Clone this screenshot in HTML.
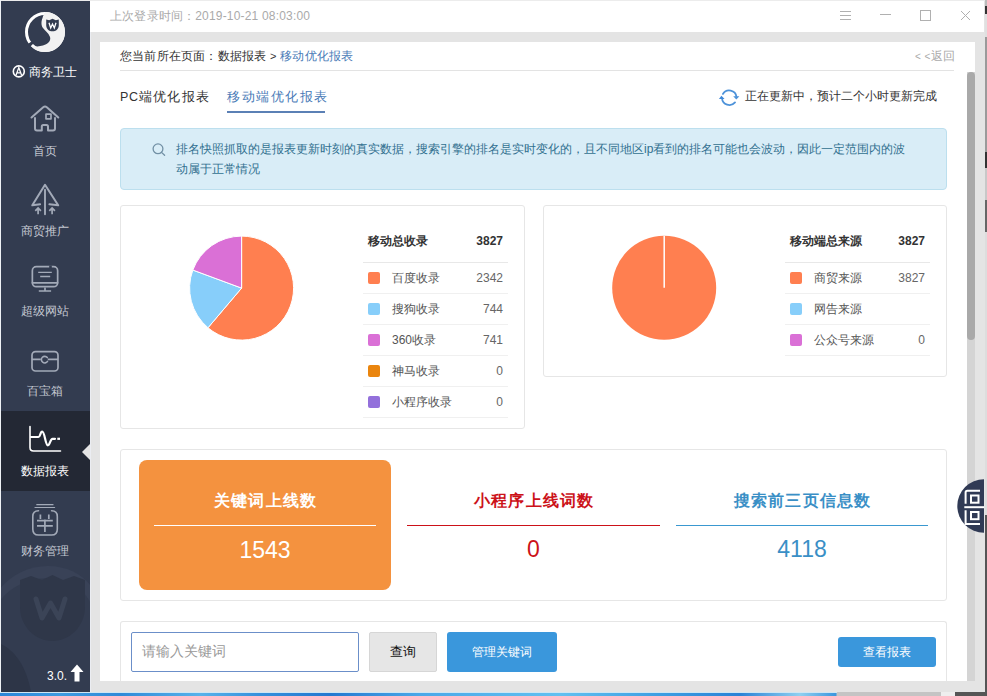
<!DOCTYPE html>
<html><head><meta charset="utf-8">
<style>
*{margin:0;padding:0;box-sizing:border-box}
html,body{width:987px;height:696px;overflow:hidden;background:#2a6fb8;font-family:"Liberation Sans",sans-serif;font-size:12px;color:#333}
.abs{position:absolute}
#desk{left:0;top:692px;width:987px;height:4px;background:linear-gradient(90deg,#2a86d8 0,#3d9be0 60px,#2f8ad8 120px,#57b2ea 200px,#3590dc 260px,#2478d0 330px,#4aa8e8 420px,#62c0f0 560px,#3d9ee2 660px,#2a82d6 740px,#8fd0f0 800px,#3a96de 836px,#c4c4c4 837px,#c4c4c4 941px,#eeeeee 941px,#eeeeee 955px,#555 955px)}
#deskr{left:984px;top:0;width:3px;height:696px;background:linear-gradient(180deg,#bbb 0,#bbb 6px,#333 6px,#333 14px,#e0e0e0 14px,#e0e0e0 37px,#9a9a9a 37px,#9a9a9a 152px,#333 152px,#333 168px,#c8c8c8 168px,#c8c8c8 200px,#666 200px,#666 232px,#ddd 232px,#ddd 515px,#555 515px)}
#win{left:0;top:0;width:985px;height:692px;background:#e4e4e4}
#topline{left:0;top:0;width:985px;height:1px;background:#ececec}
#side{left:0;top:1px;width:90px;height:691px;background:#333c50;overflow:hidden}
#sideb{left:0;top:0;width:1px;height:692px;background:#eef1f5}
#topbar{left:90px;top:1px;width:894px;height:31px;background:#fff}
.si{position:absolute;left:0;width:90px;height:80px}
.si .lb{position:absolute;left:0;width:90px;top:52px;text-align:center;color:#c5c9d2;font-size:12px;line-height:16px}
.si svg{position:absolute;left:0;top:0}
#panel{left:100px;top:42px;width:875px;height:639px;background:#fff}
</style></head>
<body>
<div id="desk" class="abs"></div>
<div class="abs" style="left:0;top:692px;width:837px;height:1px;background:#cfe6f3"></div>
<div id="deskr" class="abs"></div>
<div id="win" class="abs"></div>
<div id="topline" class="abs"></div>

<!-- sidebar -->
<div id="side" class="abs">
  <svg class="abs" style="left:0;top:0" width="90" height="691" viewBox="0 1 90 691">
    <!-- watermark -->
    <g>
      <path d="M-10,610 C-5,585 20,566 48,566 C80,566 100,590 100,610 L100,692 L-10,692 Z" fill="#394257"/>
      <path d="M-10,620 C-4,596 20,578 48,578 C76,578 94,598 96,622 L96,692 L-10,692 Z" fill="#333c50"/>
      <path d="M-10,640 C10,645 25,660 31,692 L-10,692 Z" fill="#2d3547"/>
      <path d="M20,580 L31,576 L42,580 L52.5,575 L63,580 L74,576 L85,580 L85,607 C85,626 70,641 52.5,641 C35,641 20,626 20,607 Z" fill="#2f3749"/>
      <path d="M36,599 L42,618 L50.5,603 L59,618 L65,599" fill="none" stroke="#3b4457" stroke-width="5" stroke-linecap="round" stroke-linejoin="round"/>
    </g>
    <!-- logo -->
    <circle cx="45" cy="32" r="18.5" fill="none" stroke="#fff" stroke-width="3"/>
    <path d="M30.15,46.85 L33.69,43.31 L31.9,41.18 L27.8,44.05 Z" fill="#333c50"/>
    <path d="M45,12 A20,20 0 1,1 31,46.3 C35,47 41,46.5 45.5,44.5 C50,42.5 51,39 49.8,36.5 C48.5,33 45,30.5 43,28 C41,25.5 41.2,21 42.5,18 C43.2,16 44.3,13 45,12 Z" fill="#f2f2f2"/>
    <path d="M46.2,19.6 L49.2,20.3 L52.5,18.7 L55.8,20.3 L58.8,19.6 L58.8,25.2 C58.8,29 56,31.3 52.5,31.3 C49,31.3 46.2,29 46.2,25.2 Z" fill="#333c50"/>
    <path d="M49,22.8 L50.7,28 L52.5,24 L54.3,28 L56,22.8" fill="none" stroke="#fff" stroke-width="1.3" stroke-linejoin="miter"/>
    <circle cx="18.8" cy="71.4" r="5.5" fill="none" stroke="#fff" stroke-width="1.6"/>
    <path d="M16,75.2 L18.8,67.6 L21.6,75.2 M16.9,72.8 L20.7,72.8" fill="none" stroke="#fff" stroke-width="1.3"/>
  </svg>
  <div class="abs" style="left:29px;top:64px;font-size:12px;line-height:14px;color:#fff;letter-spacing:0px;font-weight:500">商务卫士</div>

  <!-- items: top = item top - 1 (side top offset) -->
  <div class="si" style="top:90px">
    <svg width="90" height="50" viewBox="0 0 90 50" fill="none" stroke="#a3aab8" stroke-width="2" stroke-linejoin="round" stroke-linecap="round">
      <path d="M31.5,26.5 L43.2,16.2 Q45,14.8 46.8,16.2 L58.3,26.5"/>
      <path d="M35,27 L35,37.5 Q35,39.5 37,39.5 L41.8,39.5 L41.8,35.5 Q41.8,34 43.3,34 L46.5,34 Q48,34 48,35.5 L48,39.5 L53,39.5 Q55,39.5 55,37.5 L55,27"/>
      <rect x="46" y="23.2" width="5" height="4.6" stroke-width="1.7"/>
    </svg>
    <div class="lb">首页</div>
  </div>
  <div class="si" style="top:170px">
    <svg width="90" height="50" viewBox="0 0 90 50" fill="none" stroke="#a3aab8" stroke-width="2" stroke-linejoin="round" stroke-linecap="round">
      <path d="M40.1,33.3 L32.3,34.3 L45,13.8 L58.2,34.3 L49.4,33.3"/>
      <path d="M45,18.6 L45,43.3" stroke-width="1.9"/>
      <path d="M35.3,39.8 L38.1,36.9 L40.9,39.8 M38.1,37.5 L38.1,43.3 M49.3,39.8 L52.1,36.9 L54.9,39.8 M52.1,37.5 L52.1,43.3" stroke-width="1.7" stroke-linecap="butt" stroke-linejoin="miter"/>
    </svg>
    <div class="lb">商贸推广</div>
  </div>
  <div class="si" style="top:250px">
    <svg width="90" height="50" viewBox="0 0 90 50" fill="none" stroke="#a3aab8" stroke-width="2" stroke-linejoin="round" stroke-linecap="round">
      <rect x="32.35" y="15.65" width="25.3" height="20.05" rx="4" stroke-width="1.7"/>
      <path d="M49.2,14.5 L51.8,14.5 L51.8,17 L49.2,17 Z" fill="#333c50" stroke="none"/>
      <path d="M32.4,31.8 L57.6,31.8" stroke-width="1.7"/>
      <path d="M38.2,21.4 L51.8,21.4 M40.2,25.5 L50.2,25.5" stroke-width="1.4" stroke-linecap="butt"/>
      <path d="M45,36.5 L45,39.5 M38.8,40 L51.1,40" stroke-width="1.7" stroke-linecap="butt"/>
    </svg>
    <div class="lb">超级网站</div>
  </div>
  <div class="si" style="top:330px">
    <svg width="90" height="50" viewBox="0 0 90 50" fill="none" stroke="#a3aab8" stroke-width="2" stroke-linejoin="round" stroke-linecap="round">
      <rect x="32" y="20.7" width="26" height="19.3" rx="3.5" stroke-width="1.7"/>
      <path d="M32,28.4 L40.8,28.4 M47.8,28.4 L58,28.4" stroke-width="1.6" stroke-linecap="butt"/>
      <path d="M47.3,26.6 A3.3,3.3 0 1,0 47.5,30.4" stroke-width="1.6"/>
    </svg>
    <div class="lb">百宝箱</div>
  </div>
  <div class="si" style="top:410px;background:#232834">
    <svg width="90" height="80" viewBox="0 0 90 80" fill="none" stroke="#fff" stroke-width="2" stroke-linejoin="round" stroke-linecap="round">
      <path d="M30,15.5 L30,36.5 Q30,40 33.5,40 L60.5,40" stroke-width="1.6"/>
      <path d="M31,26 L38.5,26 C40.3,26 40.3,20.6 42.2,20.6 C44.8,20.6 45.3,34.3 47.9,34.3 C49.9,34.3 50.3,27.8 52.5,27.8 L55,27.8" stroke-width="2.2"/>
      <path d="M57.3,27.8 L60,27.8" stroke-width="2.2" stroke-linecap="butt"/>
      <path d="M82,41 L90,33 L90,49 Z" fill="#e4e4e4" stroke="none"/>
    </svg>
    <div class="lb" style="color:#fff">数据报表</div>
  </div>
  <div class="si" style="top:490px">
    <svg width="90" height="50" viewBox="0 0 90 50" fill="none" stroke="#a3aab8" stroke-width="2" stroke-linejoin="round" stroke-linecap="round">
      <path d="M36.8,13.7 L53,13.7 M35,16.5 L54.6,16.5" stroke-width="1.2"/>
      <path d="M38.5,19.8 Q32.8,19.8 32.8,25.5 L32.8,38.2 Q32.8,44 38.5,44 L51.6,44 Q57.3,44 57.3,38.2 L57.3,25.5 Q57.3,19.8 51.6,19.8" stroke-width="1.6"/>
      <path d="M40.4,23.4 L40.4,27.9 M48.8,23.4 L48.8,27.9 M37,29.7 L52.8,29.7 M37,34.9 L52.8,34.9 M44.9,28.5 L44.9,40.9" stroke-width="1.7" stroke-linecap="butt"/>
    </svg>
    <div class="lb">财务管理</div>
  </div>
  <div class="abs" style="left:47px;top:668px;color:#fff;font-size:12px;line-height:14px">3.0.</div>
  <svg class="abs" style="left:70px;top:663px" width="14" height="18" viewBox="0 0 14 18"><path d="M7,0.5 L13.5,8 L9.5,8 L9.5,17.5 L4.5,17.5 L4.5,8 L0.5,8 Z" fill="#fff"/></svg>
</div>
<div id="sideb" class="abs"></div>
<div class="abs" style="left:90px;top:32px;width:1px;height:660px;background:#ebedf2"></div>

<!-- top bar -->
<div id="topbar" class="abs">
  <div class="abs" style="left:20px;top:8px;color:#aaa;font-size:12px;line-height:14px;letter-spacing:0.18px">上次登录时间：2019-10-21 08:03:00</div>
  <svg class="abs" style="left:740px;top:0" width="154" height="31" viewBox="830 1 154 31" fill="none" stroke="#b0b0b0" stroke-width="1">
    <path d="M840,11.5 L851,11.5 M840,15.5 L851,15.5 M840,19.5 L851,19.5"/>
    <path d="M880,14.5 L891,14.5"/>
    <rect x="920.5" y="10.5" width="10" height="10"/>
    <path d="M961,11 L970,20 M970,11 L961,20"/>
  </svg>
</div>

<!-- content panel -->
<div id="panel" class="abs"></div>
<div class="abs" style="left:120px;top:49px;font-size:12px;line-height:14px;color:#333;white-space:nowrap;letter-spacing:0.2px">您当前所在页面：数据报表 <span style="font-size:11px">&gt;</span> <span style="color:#4a7bb7">移动优化报表</span></div>
<div class="abs" style="left:915px;top:49px;font-size:12px;line-height:14px;color:#aaa;white-space:nowrap"><span style="font-size:10px;letter-spacing:0.5px">&lt; &lt;</span>返回</div>
<div class="abs" style="left:120px;top:70px;width:834px;height:1px;background:#e3e3e3"></div>

<!-- scrollbar -->
<div class="abs" style="left:967px;top:72px;width:8px;height:609px;background:#d4d4d4"></div>
<div class="abs" style="left:967px;top:72px;width:8px;height:268px;background:#a9a9a9;border-radius:4px 4px 4px 4px"></div>

<!-- tabs -->
<div class="abs" style="left:120px;top:89px;font-size:12.5px;line-height:16px;color:#333;white-space:nowrap;letter-spacing:1.3px"><span style="letter-spacing:0.7px">PC</span>端优化报表</div>
<div class="abs" style="left:227px;top:89px;font-size:12.5px;line-height:16px;color:#4a7bb7;white-space:nowrap;letter-spacing:1.5px">移动端优化报表</div>
<div class="abs" style="left:227px;top:111px;width:98px;height:2px;background:#5b80b5"></div>

<svg class="abs" style="left:718px;top:88px" width="22" height="19" viewBox="0 0 22 19">
  <g fill="none" stroke="#4d92d9" stroke-width="1.8" stroke-linecap="round">
    <path d="M4.9,5.9 A7.4,7.4 0 0,1 18.5,8.8"/>
    <path d="M17,14.4 A7.4,7.4 0 0,1 4,10.2"/>
  </g>
  <path d="M15.2,8.3 L21.4,8.3 L18.3,11.6 Z" fill="#4d92d9"/>
  <path d="M0.9,11 L6.6,11 L3.4,7.7 Z" fill="#3f88d8"/>
</svg>
<div class="abs" style="left:745px;top:89px;font-size:12px;line-height:14px;color:#333;white-space:nowrap">正在更新中，预计二个小时更新完成</div>

<!-- info box -->
<div class="abs" style="left:120px;top:128px;width:827px;height:62px;background:#d9edf7;border:1px solid #bcdfee;border-radius:4px"></div>
<svg class="abs" style="left:150px;top:141px" width="18" height="17" viewBox="0 0 18 17" fill="none" stroke="#7290a5" stroke-width="1.3">
  <circle cx="8" cy="7.8" r="4.9"/>
  <path d="M11.5,11.4 L14.6,14.3" stroke-linecap="round"/>
</svg>
<div class="abs" style="left:176px;top:139px;font-size:12px;line-height:20px;color:#31708f;white-space:nowrap;letter-spacing:0px">排名快照抓取的是报表更新时刻的真实数据，搜索引擎的排名是实时变化的，且不同地区ip看到的排名可能也会波动，因此一定范围内的波<br>动属于正常情况</div>

<!-- card 1 -->
<div class="abs" style="left:120px;top:205px;width:405px;height:224px;border:1px solid #e6e6e6;border-radius:3px;background:#fff"></div>
<svg class="abs" style="left:120px;top:205px" width="405" height="224" viewBox="120 205 405 224">
  <g stroke="#fff" stroke-width="1">
    <path d="M241.6,288.1 L241.6,236.1 A52,52 0 1,1 207.97,327.76 Z" fill="#ff7f50"/>
    <path d="M241.6,288.1 L207.97,327.76 A52,52 0 0,1 192.83,270.06 Z" fill="#87cefa"/>
    <path d="M241.6,288.1 L192.83,270.06 A52,52 0 0,1 241.6,236.1 Z" fill="#da70d6"/>
  </g>
</svg>
<div class="abs" style="left:368px;top:234px;font-size:12px;line-height:14px;color:#333;font-weight:bold;white-space:nowrap">移动总收录</div>
<div class="abs" style="left:440px;top:234px;width:63px;text-align:right;font-size:12px;line-height:14px;color:#333;font-weight:bold">3827</div>
<div class="abs" style="left:363px;top:262px;width:145px;height:1px;background:#e8e8e8"></div>
<div class="abs" style="left:368px;top:272px;width:12px;height:12px;border-radius:2px;background:#ff7f50"></div>
<div class="abs" style="left:392px;top:271px;font-size:12px;line-height:14px;color:#555;white-space:nowrap">百度收录</div>
<div class="abs" style="left:440px;top:271px;width:63px;text-align:right;font-size:12px;line-height:14px;color:#666">2342</div>
<div class="abs" style="left:363px;top:293px;width:145px;height:1px;background:#f0f0f0"></div>
<div class="abs" style="left:368px;top:303px;width:12px;height:12px;border-radius:2px;background:#87cefa"></div>
<div class="abs" style="left:392px;top:302px;font-size:12px;line-height:14px;color:#555;white-space:nowrap">搜狗收录</div>
<div class="abs" style="left:440px;top:302px;width:63px;text-align:right;font-size:12px;line-height:14px;color:#666">744</div>
<div class="abs" style="left:363px;top:324px;width:145px;height:1px;background:#f0f0f0"></div>
<div class="abs" style="left:368px;top:334px;width:12px;height:12px;border-radius:2px;background:#da70d6"></div>
<div class="abs" style="left:392px;top:333px;font-size:12px;line-height:14px;color:#555;white-space:nowrap">360收录</div>
<div class="abs" style="left:440px;top:333px;width:63px;text-align:right;font-size:12px;line-height:14px;color:#666">741</div>
<div class="abs" style="left:363px;top:355px;width:145px;height:1px;background:#f0f0f0"></div>
<div class="abs" style="left:368px;top:365px;width:12px;height:12px;border-radius:2px;background:#ea850e"></div>
<div class="abs" style="left:392px;top:364px;font-size:12px;line-height:14px;color:#555;white-space:nowrap">神马收录</div>
<div class="abs" style="left:440px;top:364px;width:63px;text-align:right;font-size:12px;line-height:14px;color:#666">0</div>
<div class="abs" style="left:363px;top:386px;width:145px;height:1px;background:#f0f0f0"></div>
<div class="abs" style="left:368px;top:396px;width:12px;height:12px;border-radius:2px;background:#9370db"></div>
<div class="abs" style="left:392px;top:395px;font-size:12px;line-height:14px;color:#555;white-space:nowrap">小程序收录</div>
<div class="abs" style="left:440px;top:395px;width:63px;text-align:right;font-size:12px;line-height:14px;color:#666">0</div>
<div class="abs" style="left:363px;top:417px;width:145px;height:1px;background:#f0f0f0"></div>

<!-- card 2 -->
<div class="abs" style="left:543px;top:205px;width:404px;height:172px;border:1px solid #e6e6e6;border-radius:3px;background:#fff"></div>
<svg class="abs" style="left:543px;top:205px" width="404" height="172" viewBox="543 205 404 172">
  <circle cx="664.2" cy="287.8" r="52" fill="#ff7f50"/>
  <path d="M664.2,287.8 L664.2,235.8" stroke="#fff" stroke-width="1.5"/>
</svg>
<div class="abs" style="left:790px;top:234px;font-size:12px;line-height:14px;color:#333;font-weight:bold;white-space:nowrap">移动端总来源</div>
<div class="abs" style="left:862px;top:234px;width:63px;text-align:right;font-size:12px;line-height:14px;color:#333;font-weight:bold">3827</div>
<div class="abs" style="left:785px;top:262px;width:145px;height:1px;background:#e8e8e8"></div>
<div class="abs" style="left:790px;top:272px;width:12px;height:12px;border-radius:2px;background:#ff7f50"></div>
<div class="abs" style="left:814px;top:271px;font-size:12px;line-height:14px;color:#555;white-space:nowrap">商贸来源</div>
<div class="abs" style="left:862px;top:271px;width:63px;text-align:right;font-size:12px;line-height:14px;color:#666">3827</div>
<div class="abs" style="left:785px;top:293px;width:145px;height:1px;background:#f0f0f0"></div>
<div class="abs" style="left:790px;top:303px;width:12px;height:12px;border-radius:2px;background:#87cefa"></div>
<div class="abs" style="left:814px;top:302px;font-size:12px;line-height:14px;color:#555;white-space:nowrap">网告来源</div>
<div class="abs" style="left:862px;top:302px;width:63px;text-align:right;font-size:12px;line-height:14px;color:#666"></div>
<div class="abs" style="left:785px;top:324px;width:145px;height:1px;background:#f0f0f0"></div>
<div class="abs" style="left:790px;top:334px;width:12px;height:12px;border-radius:2px;background:#da70d6"></div>
<div class="abs" style="left:814px;top:333px;font-size:12px;line-height:14px;color:#555;white-space:nowrap">公众号来源</div>
<div class="abs" style="left:862px;top:333px;width:63px;text-align:right;font-size:12px;line-height:14px;color:#666">0</div>
<div class="abs" style="left:785px;top:355px;width:145px;height:1px;background:#f0f0f0"></div>

<!-- stats -->
<div class="abs" style="left:120px;top:449px;width:827px;height:152px;border:1px solid #e6e6e6;border-radius:3px;background:#fff"></div>
<div class="abs" style="left:139px;top:460px;width:252px;height:130px;background:#f4923f;border-radius:8px"></div>
<div class="abs" style="left:139px;top:491px;width:252px;text-align:center;font-size:15.5px;line-height:20px;letter-spacing:1.25px;text-indent:1.25px;color:#fff;font-weight:600">关键词上线数</div>
<div class="abs" style="left:154px;top:525px;width:222px;height:1px;background:#fff"></div>
<div class="abs" style="left:139px;top:537px;width:252px;text-align:center;font-size:23px;line-height:26px;color:#fff">1543</div>

<div class="abs" style="left:407px;top:491px;width:253px;text-align:center;font-size:15.5px;line-height:20px;letter-spacing:1.25px;text-indent:1.25px;color:#cc1219;font-weight:bold">小程序上线词数</div>
<div class="abs" style="left:407px;top:525px;width:253px;height:1px;background:#cc1219"></div>
<div class="abs" style="left:407px;top:536px;width:253px;text-align:center;font-size:23px;line-height:26px;color:#cc1219">0</div>

<div class="abs" style="left:676px;top:491px;width:252px;text-align:center;font-size:15.5px;line-height:20px;letter-spacing:1.25px;text-indent:1.25px;color:#3a8fc6;font-weight:bold">搜索前三页信息数</div>
<div class="abs" style="left:676px;top:525px;width:252px;height:1px;background:#3a98d0"></div>
<div class="abs" style="left:676px;top:536px;width:252px;text-align:center;font-size:23px;line-height:26px;color:#3a8fc6">4118</div>

<!-- bottom toolbar -->
<div class="abs" style="left:120px;top:621px;width:827px;height:60px;border:1px solid #e6e6e6;border-bottom:none;border-radius:3px 3px 0 0;background:#fff"></div>
<div class="abs" style="left:131px;top:632px;width:228px;height:40px;border:1px solid #6b8fc9;border-radius:2px;background:#fff"></div>
<div class="abs" style="left:142px;top:643px;font-size:14px;line-height:16px;color:#999;white-space:nowrap">请输入关键词</div>
<div class="abs" style="left:369px;top:632px;width:68px;height:40px;border:1px solid #d6d6d6;border-radius:2px;background:#e6e6e6;text-align:center;line-height:38px;font-size:13px;color:#111;font-weight:500">查询</div>
<div class="abs" style="left:447px;top:632px;width:110px;height:40px;border-radius:3px;background:#3a97dc;text-align:center;line-height:40px;font-size:12px;color:#fff">管理关键词</div>
<div class="abs" style="left:838px;top:637px;width:98px;height:30px;border-radius:3px;background:#3a97dc;text-align:center;line-height:30px;font-size:12px;color:#fff">查看报表</div>

<!-- float circle -->
<svg class="abs" style="left:956px;top:478px" width="28" height="56" viewBox="956 478 28 56">
  <circle cx="984.1" cy="506" r="26.8" fill="#303a55"/>
  <g fill="none" stroke="#fff" stroke-width="2">
    <path d="M980,490.7 L967.3,490.7 Q965.6,490.7 965.6,492.4 L965.6,503.7"/>
    <path d="M965.6,510.2 L965.6,524 L980,524"/>
    <path d="M964.3,507.2 L984,507.2"/>
    <rect x="971" y="495.5" width="7.5" height="7.2"/>
    <rect x="971" y="512" width="7.5" height="7.2"/>
  </g>
</svg>
</body></html>
